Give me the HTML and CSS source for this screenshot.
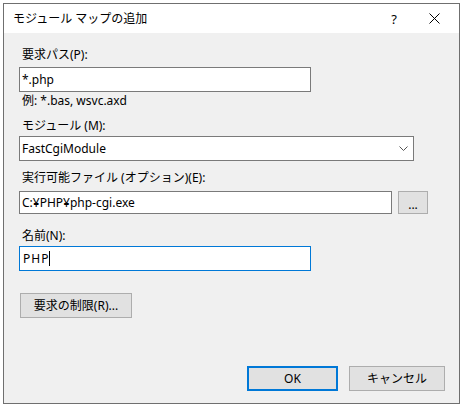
FILE: index.html
```html
<!DOCTYPE html>
<html lang="ja">
<head>
<meta charset="utf-8">
<title>モジュール マップの追加</title>
<link rel="stylesheet" href="styles.css">
</head>
<body>
<div class="dialog">
  <div class="titlebar">
    <span class="title">モジュール マップの追加</span>
    <span class="tb-btn">?</span>
    <span class="tb-btn close">
      <svg width="11" height="11" viewBox="0 0 11 11"><path d="M0.5 0.5L10.5 10.5M10.5 0.5L0.5 10.5" stroke="#000" stroke-width="1" fill="none"/></svg>
    </span>
  </div>
  <div class="body">
    <div class="label l1">要求パス(P):</div>
    <div class="field f1">*.php</div>
    <div class="hint">例: *.bas, wsvc.axd</div>
    <div class="label l2">モジュール (M):</div>
    <div class="field select">
      <span class="sel-text">FastCgiModule</span>
      <svg class="chev" width="9" height="5" viewBox="0 0 9 5"><path d="M0.5 0.5L4.5 4.5L8.5 0.5" stroke="#555" stroke-width="1" fill="none"/></svg>
    </div>
    <div class="label l3">実行可能ファイル (オプション)(E):</div>
    <div class="row">
      <div class="field f3">C:¥PHP¥php-cgi.exe</div>
      <div class="btn browse">...</div>
    </div>
    <div class="label l4">名前(N):</div>
    <div class="field f4 focused"><span class="php">PHP</span><span class="caret"></span></div>
    <div class="btn restrict">要求の制限(R)...</div>
    <div class="footer">
      <div class="btn ok">OK</div>
      <div class="btn cancel">キャンセル</div>
    </div>
  </div>
</div>
</body>
</html>
```
FILE: styles.css
```css
html, body {
  margin: 0;
  padding: 0;
  background: #ffffff;
}
body {
  font-family: "Noto Sans", "Noto Sans CJK JP", sans-serif;
  font-size: 12px;
  color: #000;
}
.dialog {
  box-sizing: border-box;
  margin: 3px 0 0 3px;
  width: 457px;
  height: 401px;
  border: 1px solid #6f6f6f;
  background: #f0f0f0;
  display: flex;
  flex-direction: column;
}
.titlebar {
  height: 29px;
  background: #ffffff;
  display: flex;
  align-items: center;
  padding-left: 9px;
  padding-right: 5px;
  line-height: 16px;
}
.title {
  flex: 1;
}
.tb-btn {
  width: 40px;
  text-align: center;
  display: flex;
  justify-content: center;
  align-items: center;
  font-size: 13px;
}
.body {
  flex: 1;
  display: flex;
  flex-direction: column;
  padding-left: 15px;
  line-height: 16px;
}
.label, .hint {
  padding-left: 3px;
}
.l1 { margin-top: 14px; }
.field {
  box-sizing: border-box;
  background: #ffffff;
  border: 1px solid #7a7a7a;
  height: 25px;
  padding: 3px 2px;
  line-height: 17px;
  white-space: nowrap;
}
.f1 {
  margin-top: 4px;
  width: 292px;
}
.hint { margin-top: 1px; }
.l2 { margin-top: 9px; }
.select {
  margin-top: 2px;
  width: 395px;
  display: flex;
  align-items: center;
}
.sel-text { flex: 1; }
.chev { margin-right: 3px; }
.l3 { margin-top: 9px; }
.row {
  margin-top: 5px;
  display: flex;
  gap: 6px;
}
.f3 {
  width: 373px;
  height: 23px;
  padding-top: 2px;
}
.btn {
  box-sizing: border-box;
  background: #e1e1e1;
  border: 1px solid #adadad;
  display: flex;
  justify-content: center;
  align-items: center;
}
.browse {
  width: 30px;
  height: 23px;
  padding-top: 4px;
}
.l4 { margin-top: 14px; }
.f4 {
  margin-top: 2px;
  width: 292px;
  display: flex;
  align-items: center;
}
.focused {
  border-color: #0078d7;
}
.php {
  letter-spacing: 1px;
  padding-left: 1px;
}
.caret {
  display: inline-block;
  width: 1px;
  height: 15px;
  background: #000;
  margin-left: 0;
}
.restrict {
  margin-top: 22px;
  width: 112px;
  height: 25px;
  margin-left: 1px;
}
.footer {
  margin-top: 48px;
  display: flex;
  justify-content: flex-end;
  gap: 11px;
  padding-right: 14px;
}
.ok {
  width: 91px;
  height: 25px;
  border: 2px solid #0078d7;
}
.cancel {
  width: 96px;
  height: 25px;
}
```
